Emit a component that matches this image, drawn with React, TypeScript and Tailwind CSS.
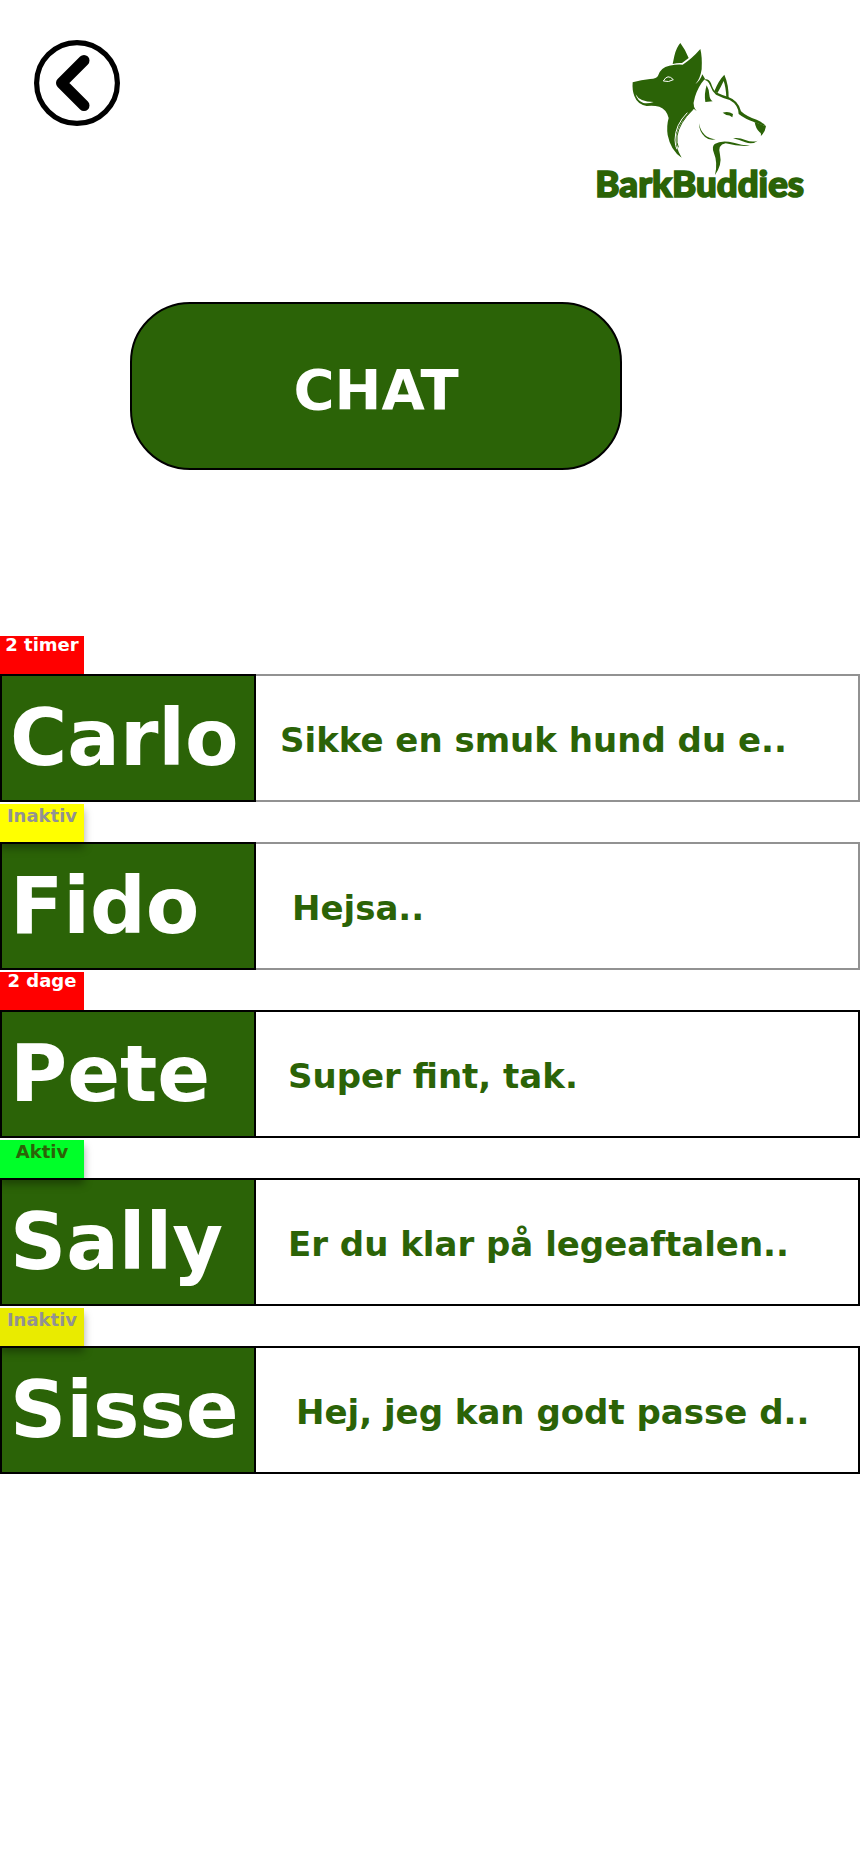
type Chat = {
  name: string;
  message: string;
  status: string;
  tag: string;
  frame: string;
  indent: string;
};

const chats: Chat[] = [
  {
    name: "Carlo",
    message: "Sikke en smuk hund du e..",
    status: "2 timer",
    tag: "bg-[#ff0000] text-white",
    frame: "border-[#929292]",
    indent: "pl-6",
  },
  {
    name: "Fido",
    message: "Hejsa..",
    status: "Inaktiv",
    tag: "bg-[#ffff00] text-[#929292] pt-[3px] shadow-[0_6px_8px_rgba(0,0,0,0.35)]",
    frame: "border-[#929292]",
    indent: "pl-9",
  },
  {
    name: "Pete",
    message: "Super fint, tak.",
    status: "2 dage",
    tag: "bg-[#ff0000] text-white",
    frame: "border-black",
    indent: "pl-8",
  },
  {
    name: "Sally",
    message: "Er du klar på legeaftalen..",
    status: "Aktiv",
    tag: "bg-[#00ff29] text-[#2b6307] pt-[3px] shadow-[0_6px_8px_rgba(0,0,0,0.35)]",
    frame: "border-black",
    indent: "pl-8",
  },
  {
    name: "Sisse",
    message: "Hej, jeg kan godt passe d..",
    status: "Inaktiv",
    tag: "bg-[#e9eb00] text-[#929292] pt-[3px] shadow-[0_6px_8px_rgba(0,0,0,0.35)]",
    frame: "border-black",
    indent: "pl-10",
  },
];

function BackIcon() {
  return (
    <svg viewBox="0 0 86 86" className="size-full" fill="none" stroke="black" aria-hidden="true">
      <circle cx="43" cy="43" r="40.4" strokeWidth="5.2" />
      <path d="M50 20.5 27.5 43 50 65.5" strokeWidth="11" strokeLinecap="round" strokeLinejoin="round" />
    </svg>
  );
}

function Logo() {
  return (
    <svg viewBox="0 0 720 540" className="h-[180px] w-[240px]" fill="#2b6307" role="img" aria-label="BarkBuddies">
      {/* dark dog */}
      <path d="M278 102 L283 78 Q289 52 301 39 Q317 60 326 84 L306 99 Q292 98 278 102Z" />
      <path d="M158 157 Q184 150 210 147 Q231 145 234 137 Q242 112 268 107 Q292 102 308 104 Q336 86 361 57 Q367 80 365 118 Q361 146 346 163 Q361 151 367 133 L375 146 Q355 168 345 200 Q338 218 342 236 Q296 275 289 315 Q285 352 305 383 Q272 362 263 315 Q259 288 266 264 Q260 238 238 230 Q222 226 200 228 Q172 223 163 198 Q156 180 158 157Z" />
      <path d="M167 193 Q178 216 221 216 Q204 222 190 219 Q172 212 167 193Z" fill="white" />
      <path d="M250 153 Q263 130 280 149 Q266 158 250 153Z" stroke="white" strokeWidth="3" />
      <path d="M322 248 Q285 285 285 330 Q286 350 291 358" fill="none" stroke="white" strokeWidth="3" />
      <path d="M338 239 Q297 279 291 318 Q289 340 295 352" fill="none" stroke="#2b6307" strokeWidth="3" />
      {/* light dog */}
      <path d="M371 149 Q386 144 393 160 Q399 180 408 187 Q427 196 445 201 Q476 212 483 244 Q500 260 530 269 Q548 276 558 289 L524 277 Q495 267 476 252 Q475 224 449 210 Q428 204 408 194 Q396 184 390 166 Q384 150 371 149Z" />
      <path d="M403 184 Q415 152 433 134 Q447 165 446 207 L439 204 Q438 172 431 153 Q423 170 412 190Z" />
      <path d="M380 166 Q372 191 376 216 L398 214 Q389 208 388 194 Q387 178 380 166Z" />
      <path d="M341 216 Q339 231 350 243 L339 235Z" />
      <path d="M428 248 Q445 242 459 252 L457 262 Q449 255 439 255Z" />
      <path d="M524 276 L558 289 Q556 306 542 319 Q545 309 539 307 Q527 296 524 276Z" />
      <path d="M357 280 Q365 324 407 328 Q389 333 375 321 Q357 305 357 280Z" />
      <path d="M459 325 Q477 322 496 330 Q517 338 533 332 Q518 345 496 337 Q478 329 459 325Z" />
      <path d="M510 347 Q484 345 461 338 Q424 329 404 342 Q395 349 401 367 Q414 399 405 435 Q427 403 420 374 Q411 345 437 340 Q477 350 510 347Z" />
      <text
        x="46"
        y="501"
        fontFamily="Lato, sans-serif"
        fontWeight="900"
        fontSize="110"
        stroke="#2b6307"
        strokeWidth="5"
      >
        BarkBuddies
      </text>
    </svg>
  );
}

function ChatRow({ chat }: { chat: Chat }) {
  return (
    <li>
      <div className={`relative z-10 h-[38px] w-[84px] text-center text-[18px] leading-[18px] whitespace-nowrap ${chat.tag}`}>
        {chat.status}
      </div>
      <a href="#" className="flex h-32">
        <span className="flex w-64 shrink-0 items-center border-2 border-black bg-[#2b6307] pl-2 text-[78px] leading-none text-white">
          {chat.name}
        </span>
        <span
          className={`flex grow items-center border-2 border-l-0 pt-1 text-[34px] leading-none whitespace-nowrap text-[#2b6307] ${chat.frame} ${chat.indent}`}
        >
          {chat.message}
        </span>
      </a>
    </li>
  );
}

export default function App() {
  return (
    <main className="min-h-screen bg-white font-['DejaVu_Sans',sans-serif] font-bold">
      <header className="flex items-start justify-between pt-[30px] pr-10 pl-[34px]">
        <button type="button" aria-label="Tilbage" className="mt-[10px] size-[86px]">
          <BackIcon />
        </button>
        <Logo />
      </header>
      <h1 className="mt-[92px] ml-[130px] flex h-[168px] w-[492px] items-center justify-center rounded-[60px] border-2 border-black bg-[#2b6307] pt-2 text-[56px] leading-none text-white">
        CHAT
      </h1>
      <ul className="mt-[166px] flex flex-col gap-[2px]">
        {chats.map((chat) => (
          <ChatRow key={chat.name} chat={chat} />
        ))}
      </ul>
    </main>
  );
}
